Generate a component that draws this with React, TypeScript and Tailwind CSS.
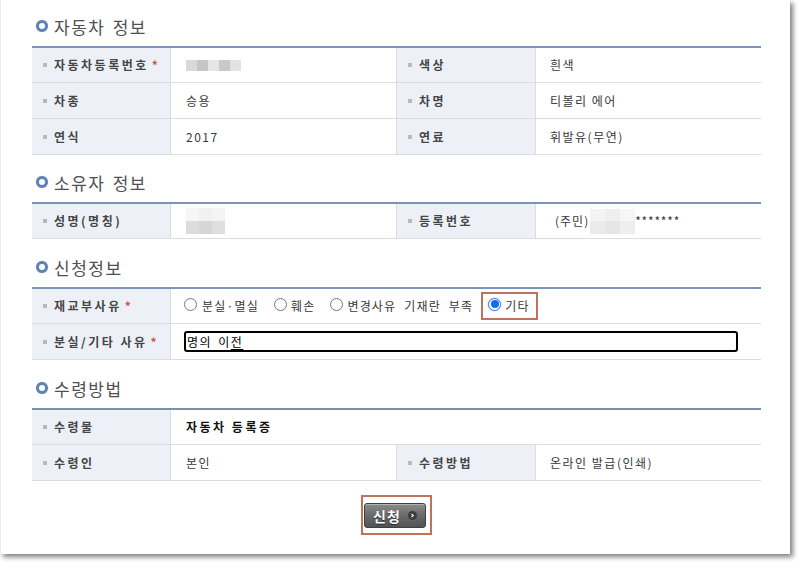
import React from "react";

const FONT = { fontFamily: '"Noto Sans CJK KR", "Noto Sans", sans-serif' };

function Heading({ title }: { title: string }) {
  return (
    <div className="flex items-center h-[30px] pl-[4px]">
      <span className="w-[12px] h-[12px] rounded-full border-[3px] border-[#5f82b6] bg-white shadow-[0_0_1px_#9fb4d4]" />
      <span className="ml-[6px] text-[17px] leading-none text-[#505050] tracking-[1.5px] [word-spacing:2px]">{title}</span>
    </div>
  );
}

function Label({ text, req }: { text: string; req?: boolean }) {
  return (
    <div className="flex items-center bg-[#edf1f7] border-r border-[#dcdcdc] pl-[11px]">
      <span className="w-[4px] h-[4px] bg-[#b9b9b9] mr-[7px] shrink-0" />
      <span className="text-[12px] font-bold tracking-[2.5px] text-[#454545] whitespace-nowrap">{text}</span>
      {req && <span className="ml-[3px] text-[12px] font-bold text-[#d0504a]">*</span>}
    </div>
  );
}

function Value({ children, pl = "pl-[15px]", border = true }: { children?: React.ReactNode; pl?: string; border?: boolean }) {
  return (
    <div className={`flex items-center ${pl} text-[12px] tracking-[1.5px] text-[#383838] whitespace-nowrap ${border ? "border-r border-[#dcdcdc]" : ""}`}>
      {children}
    </div>
  );
}

function Radio({ checked }: { checked?: boolean }) {
  if (checked) {
    return (
      <span className="w-[13px] h-[13px] rounded-full border border-[#3b7ad8] bg-white flex items-center justify-center shadow-[0_0_2px_#8fb6f2] mb-[4px] shrink-0">
        <span className="w-[8px] h-[8px] rounded-full bg-[#0c6ef0]" />
      </span>
    );
  }
  return <span className="w-[13px] h-[13px] rounded-full border border-[#777] bg-white mb-[4px] shrink-0" />;
}

export default function App() {
  return (
    <div className="w-[799px] h-[562px] bg-white overflow-hidden" style={FONT}>
      <div className="w-[790px] h-[554px] bg-white border-l border-[#ececec] shadow-[3px_3px_5px_rgba(0,0,0,0.5)] pl-[31px] pt-[11px]">
        {/* 자동차 정보 */}
        <Heading title="자동차 정보" />
        <div className="w-[729px] mt-[5px] border-t-2 border-[#7a95b8]">
          <div className="grid grid-cols-[139px_226px_139px_1fr] h-[35px] border-b border-[#dcdcdc]">
            <Label text="자동차등록번호" req />
            <Value>
              <div className="flex h-[11px]">
                <span className="w-[11px] bg-[#d9d9d9]" />
                <span className="w-[11px] bg-[#c6c6c6]" />
                <span className="w-[11px] bg-[#e6e6e6]" />
                <span className="w-[11px] bg-[#c9c9c9]" />
                <span className="w-[11px] bg-[#e2e2e2]" />
              </div>
            </Value>
            <Label text="색상" />
            <Value pl="pl-[14px]" border={false}>흰색</Value>
          </div>
          <div className="grid grid-cols-[139px_226px_139px_1fr] h-[36px] border-b border-[#dcdcdc]">
            <Label text="차종" />
            <Value>승용</Value>
            <Label text="차명" />
            <Value pl="pl-[14px]" border={false}>티볼리 에어</Value>
          </div>
          <div className="grid grid-cols-[139px_226px_139px_1fr] h-[36px] border-b border-[#dcdcdc]">
            <Label text="연식" />
            <Value>2017</Value>
            <Label text="연료" />
            <Value pl="pl-[14px]" border={false}>휘발유(무연)</Value>
          </div>
        </div>

        {/* 소유자 정보 */}
        <div className="mt-[12px]">
          <Heading title="소유자 정보" />
        </div>
        <div className="w-[729px] mt-[5px] border-t-2 border-[#7a95b8]">
          <div className="grid grid-cols-[139px_226px_139px_1fr] h-[35px] border-b border-[#dcdcdc]">
            <Label text="성명(명칭)" />
            <Value>
              <div className="flex flex-col w-[39px] h-[26px]">
                <div className="flex h-[13px]">
                  <span className="w-[13px] bg-[#f6f6f6]" />
                  <span className="w-[13px] bg-[#f1f1f1]" />
                  <span className="w-[13px] bg-[#f4f4f4]" />
                </div>
                <div className="flex h-[13px]">
                  <span className="w-[13px] bg-[#dcdcdc]" />
                  <span className="w-[13px] bg-[#d6d6d6]" />
                  <span className="w-[13px] bg-[#dedede]" />
                </div>
              </div>
            </Value>
            <Label text="등록번호" />
            <Value pl="pl-[19px]" border={false}>
              <span className="tracking-[1px]">(주민)</span>
              <div className="flex flex-col w-[45px] h-[25px] ml-[1px]">
                <div className="flex h-[12px]">
                  <span className="w-[15px] bg-[#f3f3f3]" />
                  <span className="w-[15px] bg-[#efefef]" />
                  <span className="w-[15px] bg-[#f6f6f6]" />
                </div>
                <div className="flex h-[13px]">
                  <span className="w-[15px] bg-[#ebebeb]" />
                  <span className="w-[15px] bg-[#e6e6e6]" />
                  <span className="w-[15px] bg-[#eeeeee]" />
                </div>
              </div>
              <span className="tracking-[0.8px]">*******</span>
            </Value>
          </div>
        </div>

        {/* 신청정보 */}
        <div className="mt-[13px]">
          <Heading title="신청정보" />
        </div>
        <div className="w-[729px] mt-[5px] border-t-2 border-[#7a95b8]">
          <div className="grid grid-cols-[139px_1fr] h-[35px] border-b border-[#dcdcdc]">
            <Label text="재교부사유" req />
            <div className="flex items-center pl-[13px] text-[12px] tracking-[1.2px] text-[#383838] whitespace-nowrap [word-spacing:4px]">
              <Radio />
              <span className="ml-[5px]">분실·멸실</span>
              <span className="ml-[15px] flex items-center">
                <Radio />
                <span className="ml-[4px]">훼손</span>
              </span>
              <span className="ml-[15px] flex items-center">
                <Radio />
                <span className="ml-[4px]">변경사유 기재란 부족</span>
              </span>
              <span className="ml-[8px] flex items-center h-[28px] border-2 border-[#c0735c] pl-[5px] pr-[6px]">
                <Radio checked />
                <span className="ml-[4px]">기타</span>
              </span>
            </div>
          </div>
          <div className="grid grid-cols-[139px_1fr] h-[36px] border-b border-[#dcdcdc]">
            <Label text="분실/기타 사유" req />
            <div className="flex items-center pl-[13px]">
              <div
                role="textbox"
                className="w-[554px] h-[21px] border-2 border-black rounded-[3px] flex items-center pl-[1px] text-[12px] text-black tracking-[1.5px] [word-spacing:2px] whitespace-nowrap"
              >
                명의 이<span className="underline underline-offset-[2px]">전</span>
              </div>
            </div>
          </div>
        </div>

        {/* 수령방법 */}
        <div className="mt-[13px]">
          <Heading title="수령방법" />
        </div>
        <div className="w-[729px] mt-[5px] border-t-2 border-[#7a90a4]">
          <div className="grid grid-cols-[139px_1fr] h-[35px] border-b border-[#dcdcdc]">
            <Label text="수령물" />
            <div className="flex items-center pl-[15px] text-[12px] font-bold tracking-[2.5px] text-[#111]">자동차 등록증</div>
          </div>
          <div className="grid grid-cols-[139px_226px_139px_1fr] h-[36px] border-b border-[#dcdcdc]">
            <Label text="수령인" />
            <Value>본인</Value>
            <Label text="수령방법" />
            <Value pl="pl-[14px]" border={false}>온라인 발급(인쇄)</Value>
          </div>
        </div>

        {/* 버튼 */}
        <div className="w-[729px] flex justify-center mt-[14px]">
          <div className="w-[71px] h-[40px] border-2 border-[#c0735c] pl-[1px] pt-[6px]">
            <button
              type="button"
              className="w-[62px] h-[25px] rounded-[3px] border border-[#3f3f3f] bg-gradient-to-b from-[#8c8c8c] via-[#6a6a6a] to-[#535353] shadow-[inset_0_1px_0_rgba(255,255,255,0.35)] flex items-center justify-center"
            >
              <span className="text-[14px] font-bold text-white leading-none tracking-[1px] [text-shadow:0_1px_1px_rgba(0,0,0,0.6)]">신청</span>
              <span className="ml-[7px] w-[9px] h-[9px] rounded-full bg-[#3c3c3c] flex items-center justify-center">
                <svg width="5" height="5" viewBox="0 0 5 5">
                  <path d="M1.5 0.8 L3.3 2.5 L1.5 4.2" stroke="#fff" strokeWidth="1.1" fill="none" />
                </svg>
              </span>
            </button>
          </div>
        </div>
      </div>
    </div>
  );
}
